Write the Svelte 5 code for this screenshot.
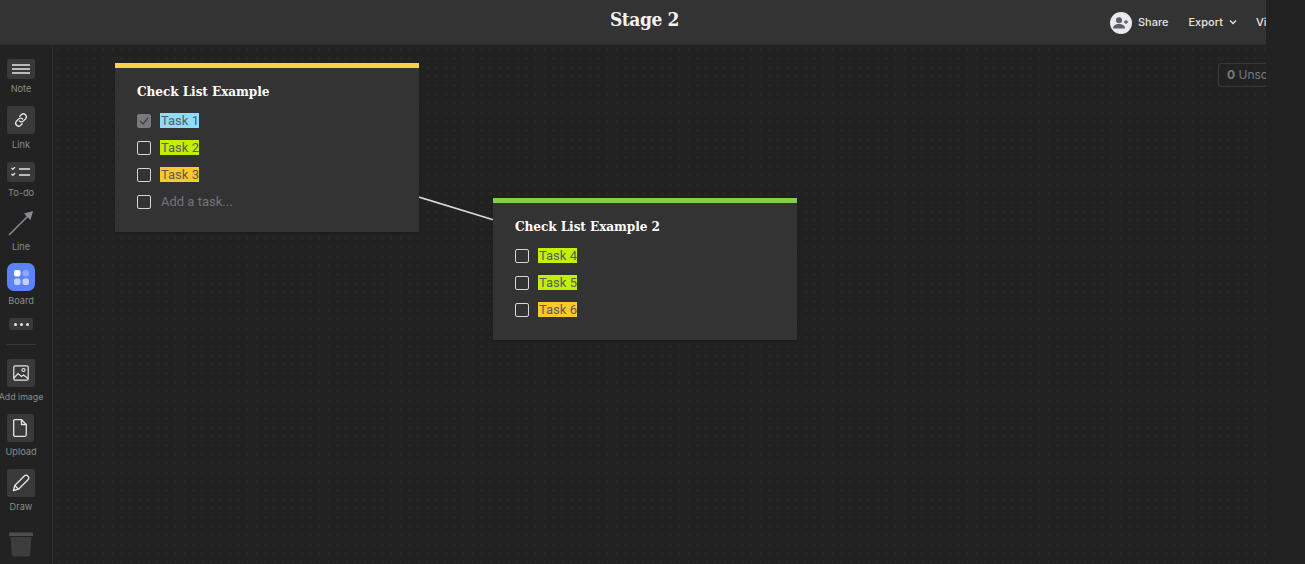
<script>
  const cards = [
    {
      title: 'Check List Example',
      accent: '#ffd04a',
      cls: 'first',
      tasks: [
        { label: 'Task 1', color: '#8fdcff', done: true },
        { label: 'Task 2', color: '#c3f000' },
        { label: 'Task 3', color: '#ffc928' }
      ],
      placeholder: 'Add a task...'
    },
    {
      title: 'Check List Example 2',
      accent: '#7ed14f',
      cls: 'second',
      tasks: [
        { label: 'Task 4', color: '#c3f000' },
        { label: 'Task 5', color: '#c3f000' },
        { label: 'Task 6', color: '#ffc928' }
      ]
    }
  ];
</script>

<div class="page">
  <header class="topbar">
    <h1>Stage 2</h1>
    <div class="actions">
      <span class="avatar">
        <svg width="16" height="12" viewBox="0 0 16 12" fill="#5c5f66">
          <circle cx="6" cy="3.2" r="3"/>
          <path d="M0 11.5c0-3 2.5-4.6 6-4.6s6 1.600 6 4.600z"/>
          <path d="M13 3v4M11 5h4" stroke="#5c5f66" stroke-width="1.300"/>
        </svg>
      </span>
      <span class="share">Share</span>
      <span class="export">Export
        <svg width="8" height="6" viewBox="0 0 8 6" fill="none" stroke="#e4e4e4" stroke-width="1.300"><path d="M1 1.500l3 3 3-3"/></svg>
      </span>
      <span class="view">View</span>
    </div>
  </header>

  <div class="main">
    <aside class="tools">
      <div class="tool note">
        <span class="box short">
          <svg width="20" height="10" viewBox="0 0 20 10" stroke="#e6e6e6" stroke-width="1.300"><path d="M1 1h18M1 5h18M1 9h18"/></svg>
        </span>
        <span class="name">Note</span>
      </div>
      <div class="tool link">
        <span class="box">
          <svg width="16" height="16" viewBox="0 0 16 16" fill="none" stroke="#e6e6e6" stroke-width="1.300" stroke-linecap="round"><path d="M6.800 4.200l1.700-1.700a3 3 0 0 1 4.200 4.200l-2.200 2.200a3 3 0 0 1-4.200 0"/><path d="M9.200 11.800l-1.700 1.700a3 3 0 0 1-4.200-4.200l2.200-2.200a3 3 0 0 1 4.200 0"/></svg>
        </span>
        <span class="name">Link</span>
      </div>
      <div class="tool todo">
        <span class="box short">
          <svg width="20" height="10" viewBox="0 0 20 10" fill="none" stroke="#e6e6e6"><path d="M.5 1l1.300 1.300L4 0M.5 7l1.300 1.300L4 6" stroke-width="1.200"/><path d="M8 2h11M8 8h11" stroke-width="1.500"/></svg>
        </span>
        <span class="name">To-do</span>
      </div>
      <div class="tool line">
        <svg width="26" height="26" viewBox="0 0 26 26"><path d="M1 25L21 5" stroke="#8a8d93" stroke-width="1.500"/><path d="M25 1l-9 2.500 6.500 6.500z" fill="#8a8d93"/></svg>
        <span class="name">Line</span>
      </div>
      <div class="tool board">
        <span class="box blue">
          <svg width="15" height="15" viewBox="0 0 15 15">
            <rect x="0" y="0" width="6.500" height="6.500" rx="2" fill="#fff"/>
            <rect x="8.500" y="0" width="6.500" height="6.500" rx="3" fill="#8fa8ff"/>
            <rect x="0" y="8.500" width="6.500" height="6.500" rx="2" fill="#c3d0ff"/>
            <rect x="8.500" y="8.500" width="6.500" height="6.500" rx="2" fill="#c3d0ff"/>
          </svg>
        </span>
        <span class="name">Board</span>
      </div>
      <div class="more"><i></i><i></i><i></i></div>
      <div class="divider"></div>
      <div class="tool addimage">
        <span class="box">
          <svg width="16" height="16" viewBox="0 0 16 16" fill="none" stroke="#e6e6e6" stroke-width="1.200"><rect x=".8" y=".8" width="14.400" height="14.400" rx="1.500"/><circle cx="10.500" cy="5" r="1.500"/><path d="M1 13l4-4.500 3.500 3 2-1.500 4.500 3.500"/></svg>
        </span>
        <span class="name">Add image</span>
      </div>
      <div class="tool upload">
        <span class="box">
          <svg width="14" height="18" viewBox="0 0 14 18" fill="none" stroke="#e6e6e6" stroke-width="1.300"><path d="M1.700.7h6.800l4.800 4.800v10.300a1.500 1.500 0 0 1-1.500 1.500H1.700a1 1 0 0 1-1-1V1.700a1 1 0 0 1 1-1z"/><path d="M8.500.7v4.800h4.800"/></svg>
        </span>
        <span class="name">Upload</span>
      </div>
      <div class="tool draw">
        <span class="box">
          <svg width="18" height="18" viewBox="0 0 18 18" fill="none" stroke="#e6e6e6" stroke-width="1.300" stroke-linejoin="round"><path d="M1.500 16.500l1.300-5L12.500 1.800a2 2 0 0 1 3 0l.7.700a2 2 0 0 1 0 3L6.500 15.200z"/><path d="M2.800 11.500l3.700 3.700"/></svg>
        </span>
        <span class="name">Draw</span>
      </div>
      <div class="trash">
        <svg width="26" height="25" viewBox="0 0 26 25"><path d="M1 1.500q0-1 1-1h22q1 0 1 1V4H1z" fill="#4d4d4d"/><path d="M2.500 5h21l-1.300 17.500q-.2 2-2 2H5.800q-1.800 0-2-2z" fill="#3d3d3d"/></svg>
      </div>
    </aside>

    <section class="canvas">
      <svg class="connector" width="90" height="40" viewBox="0 0 90 40">
        <path d="M0 1L75 24" stroke="#d8d8d8" stroke-width="1.800"/>
      </svg>

      {#each cards as card}
        <div class="card {card.cls}" style="border-top-color: {card.accent}">
          <h2>{card.title}</h2>
          <ul>
            {#each card.tasks as task}
              <li>
                <span class="check" class:done={task.done}>
                  {#if task.done}
                    <svg width="10" height="8" viewBox="0 0 10 8" fill="none" stroke="#3f4650" stroke-width="1.500"><path d="M1 4l3 3 5-6"/></svg>
                  {/if}
                </span>
                <span class="label" style="background: {task.color}">{task.label}</span>
              </li>
            {/each}
            {#if card.placeholder}
              <li>
                <span class="check"></span>
                <span class="placeholder">{card.placeholder}</span>
              </li>
            {/if}
          </ul>
        </div>
      {/each}

      <div class="unsorted"><b>0</b> Unsorted</div>
    </section>
  </div>

  <div class="strip"></div>
</div>

<style>
  :global(body) {
    margin: 0;
    background: #222;
    overflow: hidden;
  }

  .page {
    position: relative;
    width: 1305px;
    height: 564px;
    overflow: hidden;
    font-family: Inter, "Liberation Sans", sans-serif;
    background: #222;
  }

  .topbar {
    height: 45px;
    background: #333;
    border-bottom: 1px solid #2b2b2b;
    box-sizing: border-box;
    position: relative;
    display: flex;
    align-items: center;
    justify-content: center;
  }

  h1 {
    margin: 0 0 6px;
    font: bold 19px "DejaVu Serif Condensed", "DejaVu Serif", serif;
    letter-spacing: -0.4px;
    color: #f2f2f2;
    transform: translateX(-8px);
  }

  .actions {
    position: absolute;
    left: 1110px;
    top: 10px;
    display: flex;
    align-items: center;
    font-size: 11px;
    font-weight: 500;
    color: #e4e4e4;
    white-space: nowrap;
  }

  .avatar {
    width: 22px;
    height: 22px;
    border-radius: 50%;
    background: #e8e9ec;
    display: flex;
    align-items: center;
    justify-content: center;
    margin-top: 2px;
  }

  .share {
    margin-left: 6px;
  }

  .export {
    margin-left: 20px;
    display: flex;
    align-items: center;
    gap: 6px;
  }

  .view {
    margin-left: 19px;
  }

  .main {
    display: flex;
    height: 519px;
  }

  .tools {
    width: 53px;
    box-sizing: border-box;
    border-right: 1px solid #2e2e2e;
    padding: 14px 10px 0 0;
    display: flex;
    flex-direction: column;
    align-items: center;
    flex: none;
  }

  .tool {
    display: flex;
    flex-direction: column;
    align-items: center;
    width: 42px;
    white-space: nowrap;
  }

  .box {
    width: 28px;
    height: 28px;
    background: #3a3a3a;
    border-radius: 3px;
    display: flex;
    align-items: center;
    justify-content: center;
  }

  .box.short {
    height: 20px;
  }

  .box.blue {
    background: #5b82f6;
    border-radius: 7px;
  }

  .name {
    font-size: 9.200px;
    line-height: 12px;
    color: #8b8b8b;
    margin-top: 4px;
  }

  .link { margin-top: 11px; }
  .link .name { margin-top: 5px; }
  .todo { margin-top: 11px; }
  .todo .name { margin-top: 5px; }
  .line { margin-top: 11px; }
  .line .name { margin-top: 5px; }
  .board { margin-top: 10px; }
  .addimage { margin-top: 14px; }
  .addimage .name { font-size: 8.800px; }
  .upload { margin-top: 11px; }
  .upload .box { width: 27px; transform: translateX(-1px); }
  .draw { margin-top: 11px; }

  .more {
    margin-top: 11px;
    width: 24px;
    height: 12px;
    background: #3a3a3a;
    border-radius: 3px;
    display: flex;
    align-items: center;
    justify-content: center;
    gap: 3px;
  }

  .more i {
    width: 3px;
    height: 3px;
    border-radius: 50%;
    background: #e6e6e6;
  }

  .divider {
    width: 29px;
    height: 1px;
    background: #3a3a3a;
    margin-top: 14px;
  }

  .trash {
    margin-top: 19px;
    height: 25px;
  }

  .canvas {
    position: relative;
    flex: 1;
    background-color: #222;
    background-image: radial-gradient(circle, #282828 1px, transparent 1.200px);
    background-size: 9px 9px;
    background-position: 1px 0;
  }

  .connector {
    position: absolute;
    left: 366px;
    top: 151px;
  }

  .card {
    position: absolute;
    width: 304px;
    box-sizing: border-box;
    background: #333;
    border-top: 5px solid;
    padding: 14px 22px 0;
    box-shadow: 0 1px 3px rgba(0, 0, 0, 0.3);
  }

  .card.first {
    left: 62px;
    top: 18px;
    height: 169px;
  }

  .card.second {
    left: 440px;
    top: 153px;
    height: 142px;
  }

  h2 {
    margin: 0 0 7px;
    font: bold 13.500px/18px "DejaVu Serif Condensed", "DejaVu Serif", serif;
    letter-spacing: -0.1px;
    color: #fff;
  }

  ul {
    list-style: none;
    margin: 0;
    padding: 0;
  }

  li {
    height: 27px;
    display: flex;
    align-items: center;
    font-size: 13px;
    font-family: Roboto, Inter, sans-serif;
  }

  .check {
    box-sizing: content-box;
    border: 1px solid #d6d6d6;
    width: 12px;
    height: 12px;
    border-radius: 2px;
    margin-right: 9px;
    flex: none;
    display: flex;
    align-items: center;
    justify-content: center;
  }

  .check.done {
    background: #77797d;
    border-color: #77797d;
  }

  .label {
    color: #565c63;
    padding: 0 0 0 1px;
    line-height: 15px;
  }

  .placeholder {
    color: #70757c;
    margin-left: 1px;
  }

  .unsorted {
    position: absolute;
    left: 1165px;
    top: 18px;
    height: 24px;
    padding: 0 8px;
    box-sizing: border-box;
    border: 1px solid #383838;
    border-radius: 3px;
    font-size: 12px;
    line-height: 22px;
    color: #7a7a7a;
    white-space: nowrap;
  }

  .strip {
    position: absolute;
    left: 1266px;
    top: 0;
    width: 39px;
    height: 564px;
    background: #222;
  }
</style>
